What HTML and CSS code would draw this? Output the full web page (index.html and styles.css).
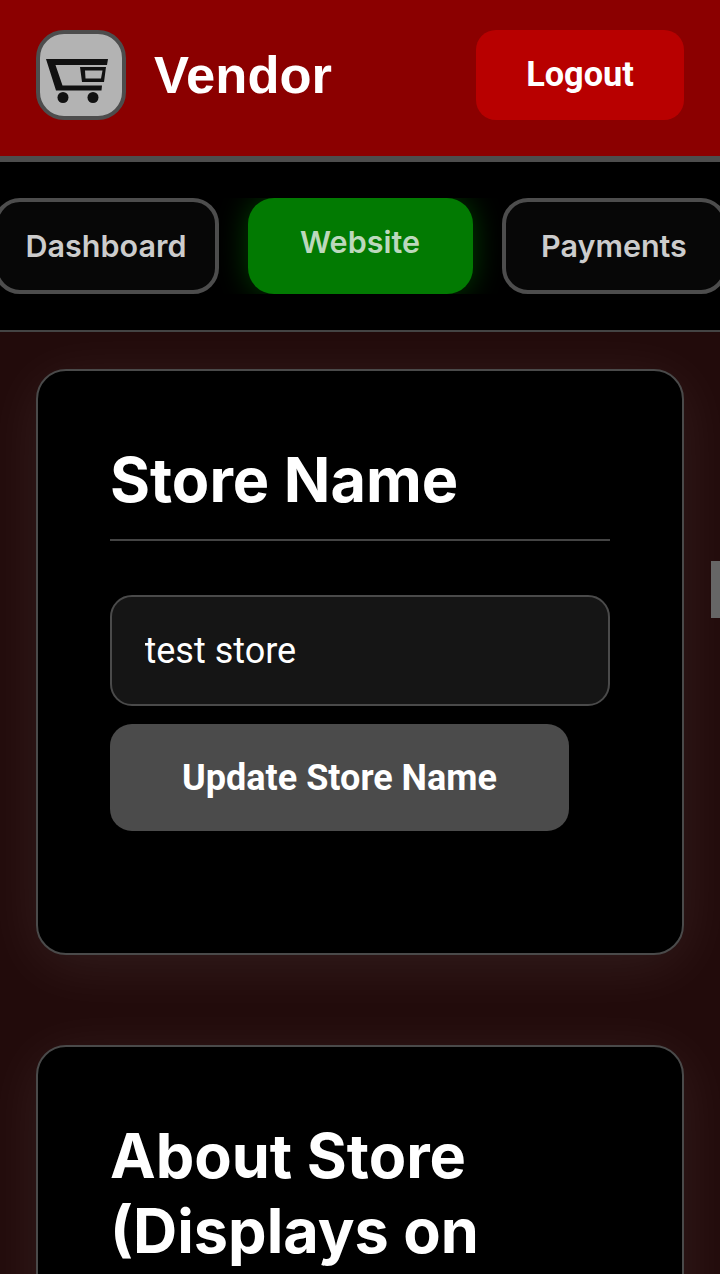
FILE: index.html
```html
<!DOCTYPE html>
<html lang="en">
<head>
<meta charset="utf-8">
<title>Vendor</title>
<link rel="stylesheet" href="styles.css">
</head>
<body>
<header class="topbar">
  <div class="brand">
    <div class="logo">
      <svg class="logo-icon" viewBox="0 0 62 44" width="62" height="44" aria-hidden="true">
        <path fill="#111" d="M0 0H62L61 6H9.500L16.500 26.500H56L55.500 31.500H10Z"/>
        <path fill="#111" fill-rule="evenodd" d="M34 8H60L58 23H36ZM39 11.500 39.500 19.500H55L56.500 11.500Z"/>
        <circle fill="#111" cx="17" cy="38.500" r="5.500"/>
        <circle fill="#111" cx="47" cy="38.500" r="5.500"/>
      </svg>
    </div>
    <h1 class="brand-name">Vendor</h1>
  </div>
  <button class="logout">Logout</button>
</header>
<nav class="tabs">
  <a class="tab">Dashboard</a>
  <a class="tab tab-active">Website</a>
  <a class="tab">Payments</a>
</nav>
<main class="content">
  <section class="card">
    <h2 class="card-title">Store Name</h2>
    <input class="field" type="text" value="test store">
    <button class="submit">Update Store Name</button>
  </section>
  <section class="card">
    <h2 class="card-title">About Store (Displays on Website)</h2>
  </section>
  <div class="scroll-thumb"></div>
</main>
</body>
</html>
```
FILE: styles.css
```css
* { box-sizing: border-box; }
html, body { margin: 0; height: 1274px; overflow: hidden; }
body { background: #220b0b; color: #fff; font-family: "Inter", sans-serif; }

.topbar {
  height: 162px;
  padding: 30px 36px 0;
  display: flex;
  justify-content: space-between;
  align-items: flex-start;
  background: #8b0000;
  border-bottom: 6px solid #4d4d4d;
}
.brand { display: flex; align-items: center; gap: 28px; }
.logo {
  width: 90px;
  height: 90px;
  border: 4px solid #4d4d4d;
  border-radius: 28px;
  background: #b3b3b3;
  display: flex;
  align-items: center;
  justify-content: center;
}
.logo-icon { display: block; margin: 12px 8px 0 0; }
.brand-name {
  margin: 0;
  font: 700 52.500px/1 "Liberation Sans", Arial, sans-serif;
}
.logout {
  width: 208px;
  height: 90px;
  padding: 0 0 3px;
  border: 0;
  border-radius: 20px;
  background: #b80000;
  color: #fff;
  font: 700 34.300px "Roboto", sans-serif;
}

.tabs {
  height: 170px;
  padding-top: 36px;
  display: flex;
  justify-content: center;
  align-items: flex-start;
  gap: 29px;
  overflow: hidden;
  background: #000;
  border-bottom: 2px solid #444;
}
.tab {
  flex: none;
  width: 225px;
  height: 96px;
  padding-bottom: 2px;
  display: flex;
  align-items: center;
  justify-content: center;
  border: 4px solid #4d4d4d;
  border-radius: 26px;
  background: #070707;
  color: #ccc;
  font-size: 30.500px;
  font-weight: 600;
}
.tab-active {
  padding-bottom: 10px;
  border: 0;
  background: #027a02;
  color: #bcd8bc;
  box-shadow: 0 0 30px rgba(0, 128, 0, 0.5);
  clip-path: inset(0 -30px 0 -30px);
}

.content {
  position: relative;
  height: 942px;
  padding: 37px 36px 0;
  overflow: hidden;
}
.card {
  height: 586px;
  margin-bottom: 90px;
  padding: 72px 72px 0;
  background: #000;
  border: 2px solid #4a4a4a;
  border-radius: 30px;
  box-shadow: 0 10px 60px rgba(255, 255, 255, 0.08);
}
.card-title {
  margin: 0 0 54px;
  padding-bottom: 21px;
  border-bottom: 2px solid #444;
  font-size: 61.200px;
  font-weight: 700;
  line-height: 75px;
}
.field {
  display: block;
  width: 100%;
  height: 111px;
  padding: 0 32.500px;
  border: 2px solid #4a4a4a;
  border-radius: 22px;
  background: #151515;
  color: #fff;
  font: 400 36px "Roboto", sans-serif;
}
.submit {
  display: block;
  width: 459px;
  height: 107px;
  margin-top: 18px;
  padding: 0;
  border: 0;
  border-radius: 22px;
  background: #4b4b4b;
  color: #fff;
  font: 700 36px "Roboto", sans-serif;
}
.scroll-thumb {
  position: absolute;
  top: 229px;
  right: 0;
  width: 9px;
  height: 57px;
  background: #666;
}
```
